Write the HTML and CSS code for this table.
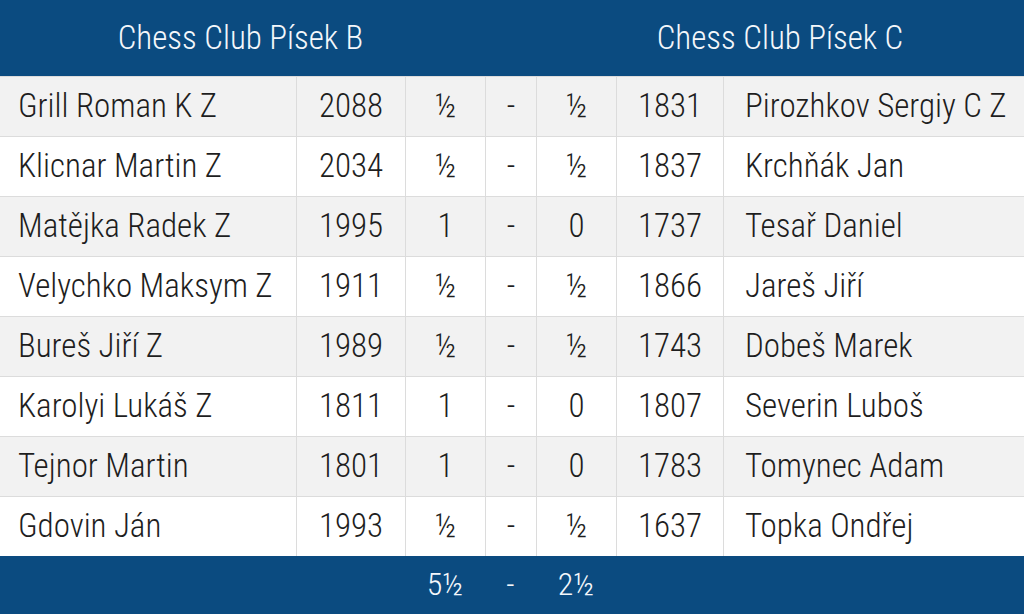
FILE: index.html
```html
<!DOCTYPE html>
<html lang="cs">
<head>
<meta charset="utf-8">
<link rel="stylesheet" href="styles.css">
</head>
<body>
<div class="match">
  <div class="head team-a">Chess Club Písek B</div>
  <div class="head mid"></div>
  <div class="head team-b">Chess Club Písek C</div>

  <div class="cell name">Grill Roman K Z</div><div class="cell">2088</div><div class="cell">½</div><div class="cell">-</div><div class="cell">½</div><div class="cell">1831</div><div class="cell name">Pirozhkov Sergiy C Z</div>
  <div class="cell name">Klicnar Martin Z</div><div class="cell">2034</div><div class="cell">½</div><div class="cell">-</div><div class="cell">½</div><div class="cell">1837</div><div class="cell name">Krchňák Jan</div>
  <div class="cell name">Matějka Radek Z</div><div class="cell">1995</div><div class="cell">1</div><div class="cell">-</div><div class="cell">0</div><div class="cell">1737</div><div class="cell name">Tesař Daniel</div>
  <div class="cell name">Velychko Maksym Z</div><div class="cell">1911</div><div class="cell">½</div><div class="cell">-</div><div class="cell">½</div><div class="cell">1866</div><div class="cell name">Jareš Jiří</div>
  <div class="cell name">Bureš Jiří Z</div><div class="cell">1989</div><div class="cell">½</div><div class="cell">-</div><div class="cell">½</div><div class="cell">1743</div><div class="cell name">Dobeš Marek</div>
  <div class="cell name">Karolyi Lukáš Z</div><div class="cell">1811</div><div class="cell">1</div><div class="cell">-</div><div class="cell">0</div><div class="cell">1807</div><div class="cell name">Severin Luboš</div>
  <div class="cell name">Tejnor Martin</div><div class="cell">1801</div><div class="cell">1</div><div class="cell">-</div><div class="cell">0</div><div class="cell">1783</div><div class="cell name">Tomynec Adam</div>
  <div class="cell name">Gdovin Ján</div><div class="cell">1993</div><div class="cell">½</div><div class="cell">-</div><div class="cell">½</div><div class="cell">1637</div><div class="cell name">Topka Ondřej</div>

  <div class="foot blank-a"></div>
  <div class="foot">5½</div>
  <div class="foot">-</div>
  <div class="foot">2½</div>
  <div class="foot blank-b"></div>
</div>
</body>
</html>
```
FILE: styles.css
```css
* { box-sizing: border-box; }
html, body { margin: 0; padding: 0; }
body {
  width: 1024px;
  height: 614px;
  overflow: hidden;
  background: #ffffff;
  font-family: Roboto, "Liberation Sans Narrow", "DejaVu Sans Condensed", sans-serif;
  font-stretch: 75%;
}
.match {
  display: grid;
  grid-template-columns: 296px 109px 80px 51px 80px 107px 301px;
  grid-template-rows: 76px repeat(8, 60px) 58px;
}
.head {
  background: #0b4b80;
  color: #f4f7fb;
  font-weight: 300;
  font-size: 33px;
  display: flex;
  align-items: center;
  justify-content: center;
  padding-bottom: 2px;
}
.team-a { grid-column: 1 / 4; padding-right: 4px; }
.team-b { grid-column: 5 / 8; }
.cell {
  display: flex;
  align-items: center;
  justify-content: center;
  font-size: 33px;
  font-weight: 300;
  color: #1e1e1e;
  border-top: 1px solid #dcdcdc;
  border-left: 1px solid #dcdcdc;
  padding-bottom: 3px;
}
.cell:nth-child(7n+4) { border-left: 0; }
.cell:nth-child(14n+4), .cell:nth-child(14n+5), .cell:nth-child(14n+6),
.cell:nth-child(14n+7), .cell:nth-child(14n+8), .cell:nth-child(14n+9),
.cell:nth-child(14n+10) { background: #f2f2f2; }
.cell.name {
  justify-content: flex-start;
  padding-left: 18px;
}
.cell:nth-child(7n+3).name { padding-left: 21px; }
.foot {
  background: #0b4b80;
  color: #f4f7fb;
  font-weight: 300;
  font-size: 32px;
  display: flex;
  align-items: center;
  justify-content: center;
  padding-bottom: 2px;
}
.blank-a { grid-column: 1 / 3; }
.blank-b { grid-column: 6 / 8; }
```
